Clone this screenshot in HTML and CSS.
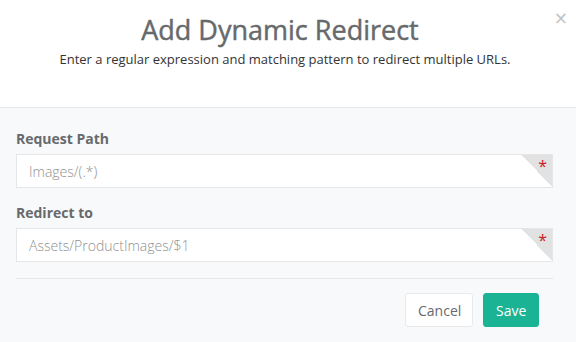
FILE: index.html
```html
<!DOCTYPE html>
<html>
<head>
<meta charset="utf-8">
<link rel="stylesheet" href="styles.css">
</head>
<body>
<div class="modal">
  <div class="modal-header">
    <h1 class="title">Add Dynamic Redirect</h1>
    <p class="subtitle">Enter a regular expression and matching pattern to redirect multiple URLs.</p>
    <span class="close">&times;</span>
  </div>
  <div class="modal-body">
    <div class="field">
      <label class="label">Request Path</label>
      <div class="input">
        <span class="value">Images/(.*)</span>
        <span class="req"><span class="star">*</span></span>
      </div>
    </div>
    <div class="field">
      <label class="label">Redirect to</label>
      <div class="input">
        <span class="value">Assets/ProductImages/$1</span>
        <span class="req"><span class="star">*</span></span>
      </div>
    </div>
    <div class="footer">
      <button class="btn btn-cancel">Cancel</button>
      <button class="btn btn-save">Save</button>
    </div>
  </div>
</div>
</body>
</html>
```
FILE: styles.css
```css
* { box-sizing: border-box; }
html, body { margin: 0; padding: 0; }
body {
  font-family: "Open Sans", "Noto Sans", sans-serif;
  background: #f8f9fa;
  width: 576px;
  height: 342px;
  overflow: hidden;
}
.modal { width: 576px; height: 342px; display: flex; flex-direction: column; }
.modal-header {
  position: relative;
  background: #fff;
  height: 108px;
  border-bottom: 1px solid #e6e6e6;
  text-align: center;
  padding-top: 12px;
}
.title {
  margin: 0 16px 0 0;
  font-size: 27px;
  font-weight: 400;
  -webkit-text-stroke: 0.45px #676a6c;
  color: #676a6c;
  line-height: 36px;
}
.subtitle {
  margin: 2px 6px 0 0;
  font-size: 13px;
  color: #333;
  line-height: 18px;
}
.close {
  position: absolute;
  right: 8px;
  top: 8px;
  font-size: 17px;
  color: #c2c2c2;
  line-height: 20px;
  font-family: "DejaVu Sans", sans-serif;
}
.modal-body {
  flex: 1;
  padding: 21px 23px 0 16px;
  display: flex;
  flex-direction: column;
}
.field { display: flex; flex-direction: column; margin-bottom: 15px; }
.label {
  font-size: 14px;
  font-weight: 700;
  color: #676a6c;
  line-height: 20px;
  margin-bottom: 5px;
}
.input {
  position: relative;
  height: 34px;
  background: #fff;
  border: 1px solid #e5e6e7;
  display: flex;
  align-items: center;
  padding-left: 12px;
}
.value { font-size: 14px; font-weight: 300; color: #8f8f8f; }
.req {
  position: absolute;
  right: 0;
  top: 0;
  width: 30px;
  height: 32px;
  background: linear-gradient(to top right, transparent 50%, #e2e2e2 50%);
}
.star {
  position: absolute;
  right: 5px;
  top: 2px;
  color: #cc1a1a;
  font-size: 16px;
  line-height: 18px;
  font-weight: 400;
}
.footer {
  border-top: 1px solid #e5e6e7;
  margin-top: 1px;
  padding-top: 14px;
  display: flex;
  justify-content: flex-end;
  gap: 10px;
  padding-right: 14px;
}
.btn {
  font-family: "Open Sans", "Noto Sans", sans-serif;
  font-size: 14px;
  height: 34px;
  border-radius: 3px;
  padding: 0 12px;
  cursor: pointer;
}
.btn-cancel { background: #fff; border: 1px solid #e7eaec; color: #676a6c; width: 68px; }
.btn-save { background: #1ab394; border: 1px solid #1ab394; color: #fff; width: 56px; }
```
